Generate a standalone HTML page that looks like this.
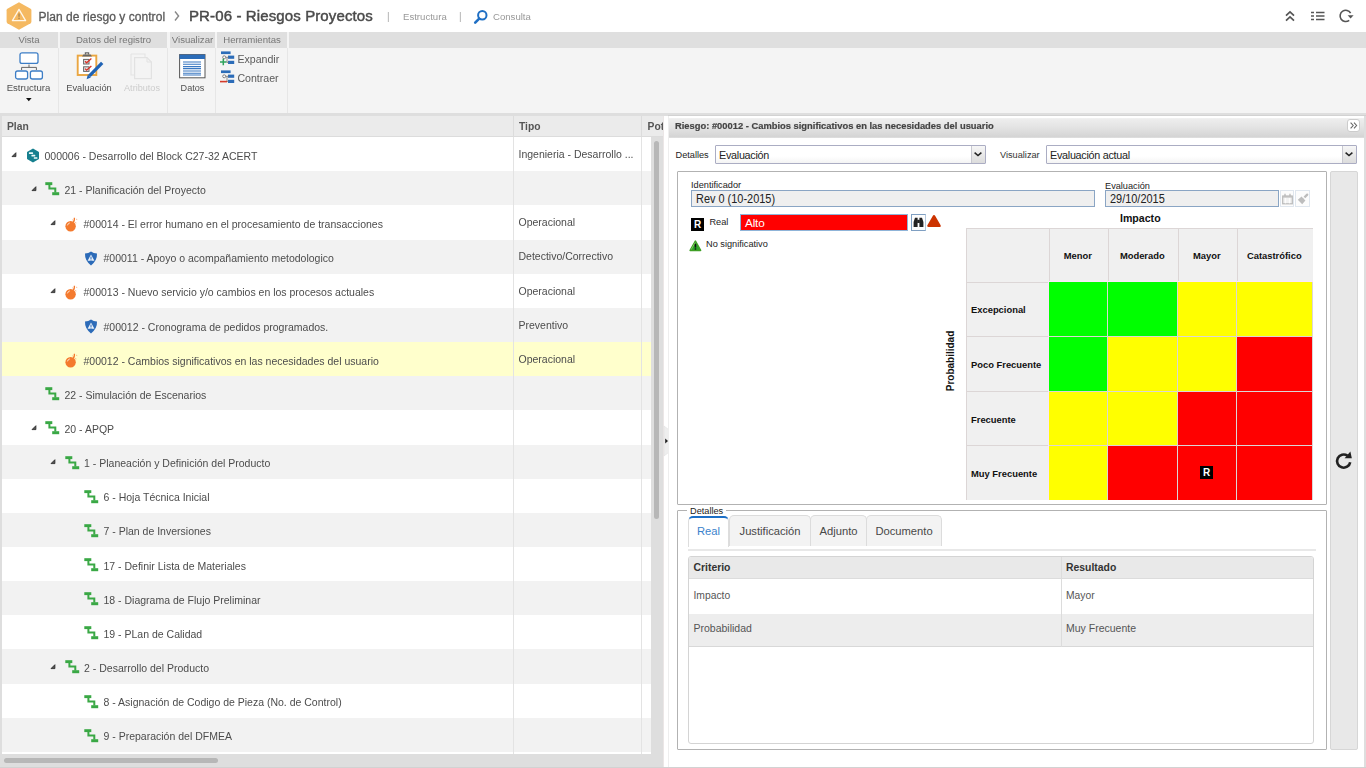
<!DOCTYPE html>
<html lang="es">
<head>
<meta charset="utf-8">
<title>PR-06 - Riesgos Proyectos</title>
<style>
*{box-sizing:border-box;margin:0;padding:0}
html,body{width:1366px;height:768px;overflow:hidden;background:#fff;font-family:"Liberation Sans",sans-serif;font-size:11px;color:#444}
.abs{position:absolute}
svg{position:absolute;overflow:visible}
#top{will-change:transform;position:absolute;left:0;top:0;width:1366px;height:32px;background:#fff}
#top .t1{position:absolute;left:38.5px;top:10px;font-size:12px;color:#5a5a5a;white-space:nowrap;-webkit-text-stroke:0.3px #5a5a5a;letter-spacing:.05px}
#top .t2{position:absolute;left:189px;top:6.6px;font-size:15px;color:#4a4a4a;white-space:nowrap;-webkit-text-stroke:0.45px #4a4a4a;letter-spacing:0.12px}
#top .bar{position:absolute;top:11px;font-size:10px;color:#aaa}
#top .lnk{position:absolute;top:11px;font-size:9.6px;color:#999;white-space:nowrap}
/* ribbon */
#ribbon{will-change:transform;position:absolute;left:0;top:32px;width:1366px;height:81px;background:#f4f4f4}
.gh{position:absolute;top:0;height:16px;background:#dfdfdf;color:#777;font-size:9.6px;text-align:center;line-height:15px;white-space:nowrap}
.gs{position:absolute;top:16px;width:1px;height:65px;background:#e6e6e6}
.lbl{position:absolute;font-size:9.6px;color:#505050;white-space:nowrap;text-align:center;line-height:12px}
.lbl2{position:absolute;font-size:10.6px;color:#5a5a5a;white-space:nowrap;line-height:12px}
#band{position:absolute;left:0;top:113px;width:1366px;height:3px;background:#dedede}
#band2{position:absolute;left:668px;top:115px;width:698px;height:1px;background:#d2d2d2}
/* grid */
#grid{position:absolute;left:0;top:116px;width:663px;height:652px;background:#dedede}
#ghead{will-change:transform;position:absolute;left:2px;top:0;width:661px;height:21px;background:#ebebeb;border-bottom:1px solid #dcdcdc}
#ghead span{position:absolute;top:4.9px;font-size:10.3px;font-weight:bold;color:#555;white-space:nowrap}
#gbody{will-change:transform;position:absolute;left:2px;top:21px;width:649px;height:617px;background:#fff;overflow:hidden}
.row{position:absolute;left:0;width:649px;height:34.15px;background:#fff}
.row.alt{background:#f2f2f2}
.row.sel{background:#ffffcc}
.row .tx{position:absolute;top:12.6px;font-size:10.5px;color:#4c4c4c;white-space:nowrap;line-height:13px}
.row .tp{position:absolute;left:516.5px;top:10.8px;font-size:10.5px;color:#4c4c4c;white-space:nowrap;line-height:13px}
.vline{position:absolute;top:0;width:1px;background:#e3e3e3}
#vtrack{position:absolute;left:651px;top:21px;width:12px;height:617px;background:#dedede}
#vthumb{position:absolute;left:654px;top:25px;width:5px;height:378px;background:#b7b7b7;border-radius:3px}
#hthumb{position:absolute;left:4px;top:642px;width:214px;height:5px;background:#b7b7b7;border-radius:3px}
/* splitter */
#split{position:absolute;left:663px;top:116px;width:5px;height:652px;background:#fff;border-left:1px solid #ebe6e6}
/* right panel */
#rp{position:absolute;left:668px;top:116px;width:696px;height:651px;background:#fff;border-left:1px solid #eee}
#rphead{will-change:transform;position:absolute;left:0;top:0;width:696px;height:22px;background:linear-gradient(#fff,#fff 7%,#eeeeee 12%,#e4e4e4 50%,#d4d4d4 96%,#e8e8e8)}
#rphead span{position:absolute;left:6px;top:3.6px;font-size:9.8px;-webkit-text-stroke:.2px #444;transform:scaleX(.955);transform-origin:left center;font-weight:bold;color:#444;white-space:nowrap}
.sel-box{position:absolute;height:19px;border:1px solid #abadc3;background:linear-gradient(#fff,#fff 60%,#f4f4f4);font-size:10.8px;letter-spacing:-.28px;color:#222;line-height:19px;padding-left:3px;white-space:nowrap;border-radius:1px}
.sel-box i{position:absolute;right:0;top:0;width:14px;height:17px;background:linear-gradient(#f6f6f6,#dcdcdc);border-left:1px solid #c8c8d0}
.fs{position:absolute;border:1px solid #b2b2b2;border-radius:1px}
.inp{position:absolute;height:17px;border:1px solid #8aa5c4;background:#efefef;font-size:12.5px;color:#222;line-height:17.6px;padding-left:3.6px;white-space:nowrap}
.s10{font-size:9.2px;color:#222;white-space:nowrap;position:absolute;line-height:11px}
.s9{font-size:9.2px;color:#222;white-space:nowrap;position:absolute;line-height:11px}
.ricon{position:absolute;width:13px;height:13px;background:#000;color:#fff;font-size:10px;font-weight:bold;line-height:13px;text-align:center}
/* matrix */
.mc{position:absolute;background:#f0f0f0}
.mh{position:absolute;font-size:9.4px;font-weight:bold;color:#111;white-space:nowrap;line-height:12px}
.g{background:#00ff00}.y{background:#ffff00}.r{background:#ff0000}
/* tabs */
.tab{position:absolute;top:-.6px;height:30.6px;background:#f3f3f3;border:1px solid #dcdcdc;border-bottom:none;border-radius:5px 5px 0 0;font-size:11.2px;color:#484848;line-height:30.4px;text-align:center;white-space:nowrap}
.tab.on{top:0;background:#fff;border:1px solid #ddd;border-top:2px solid #1c6fc6;border-bottom:none;height:31px;color:#3a82cc;line-height:27.2px}

.inp b{font-weight:normal;display:inline-block;transform:scale(.875,1);transform-origin:left center}

</style>
</head>
<body>
<div id="top">
  <svg style="left:5.3px;top:.8px" width="28" height="30" viewBox="0 0 28 30"><path d="M14 1.2 L25.6 7.8 Q26.4 8.3 26.4 9.2 V20.8 Q26.4 21.7 25.6 22.2 L14 28.8 L2.4 22.2 Q1.6 21.7 1.6 20.8 V9.2 Q1.6 8.3 2.4 7.8 Z" fill="#f5b961"/><path d="M14 8.4 L20.6 19.6 H7.4 Z" fill="none" stroke="#fff7ea" stroke-width="1.3" stroke-linejoin="round"/><rect x="13.2" y="12.4" width="1.7" height="3.4" fill="#b98f55"/><rect x="13.2" y="16.6" width="1.7" height="1.5" fill="#b98f55"/></svg>
  <div class="t1">Plan de riesgo y control</div>
  <svg style="left:173px;top:10px" width="8" height="12" viewBox="0 0 8 12"><path d="M2 1.5 L5.6 6 L2 10.5" fill="none" stroke="#888" stroke-width="1.4"/></svg>
  <div class="t2">PR-06 - Riesgos Proyectos</div>
  <div class="bar" style="left:387px">|</div>
  <div class="lnk" style="left:403px">Estructura</div>
  <div class="bar" style="left:459px">|</div>
  <svg style="left:473px;top:9px" width="16" height="16" viewBox="0 0 16 16"><circle cx="9.3" cy="6.3" r="4.2" fill="none" stroke="#1f6fc4" stroke-width="2"/><path d="M6.2 9.6 L2.2 13.6" stroke="#1f6fc4" stroke-width="2.6" stroke-linecap="round"/></svg>
  <div class="lnk" style="left:493px">Consulta</div>
  <!-- right icons -->
  <svg style="left:1285px;top:10px" width="10" height="12" viewBox="0 0 10 12"><path d="M1 5.6 L5 1.8 L9 5.6 M1 10.6 L5 6.8 L9 10.6" fill="none" stroke="#555" stroke-width="1.7"/></svg>
  <svg style="left:1311px;top:11px" width="14" height="10" viewBox="0 0 14 10"><path d="M0 1.5 H3 M5 1.5 H13.5 M0 5 H3 M5 5 H13.5 M0 8.5 H3 M5 8.5 H13.5" stroke="#555" stroke-width="1.5"/></svg>
  <svg style="left:1338px;top:8px" width="17" height="15" viewBox="0 0 17 15"><path d="M11.2 12.3 A5.6 5.6 0 1 1 12.6 5.2" fill="none" stroke="#555" stroke-width="1.6"/><path d="M9.6 7.2 H15.6 L12.6 10.6 Z" fill="#555"/></svg>
</div>

<div id="ribbon">
  <div class="gh" style="left:0;width:58px">Vista</div>
  <div class="gh" style="left:60px;width:107px">Datos del registro</div>
  <div class="gh" style="left:170px;width:45px">Visualizar</div>
  <div class="gh" style="left:217px;width:70px">Herramientas</div>
  <div class="gh" style="left:289px;width:1077px"></div>
  <div class="gs" style="left:58px"></div><div class="gs" style="left:167px"></div><div class="gs" style="left:215px"></div><div class="gs" style="left:287px"></div>
  <!-- Estructura icon -->
  <svg style="left:14px;top:19px" width="30" height="29" viewBox="0 0 30 29"><rect x="6" y="1.8" width="18" height="10.6" rx="2" fill="#fff" stroke="#3d7ec6" stroke-width="1.3"/><rect x="1.6" y="20" width="12" height="8" rx="2" fill="#fff" stroke="#3d7ec6" stroke-width="1.3"/><rect x="16.4" y="20" width="12" height="8" rx="2" fill="#fff" stroke="#3d7ec6" stroke-width="1.3"/><path d="M15 13.5 V16.4 M7.6 19 V16.4 H22.4 V19" fill="none" stroke="#666" stroke-width="1"/></svg>
  <div class="lbl" style="left:0;width:57px;top:50px">Estructura</div>
  <svg style="left:26px;top:66px" width="6" height="4" viewBox="0 0 6 4"><path d="M0 0 H5.6 L2.8 3.2 Z" fill="#111"/></svg>
  <!-- Evaluacion icon -->
  <svg style="left:76px;top:20px" width="29" height="29" viewBox="0 0 29 29"><rect x="1.7" y="3.6" width="18.6" height="19.4" fill="#fff" stroke="#eaa642" stroke-width="1.9"/><path d="M6 4.4 L7.4 2.6 H14.6 L16 4.4 Z" fill="#666"/><path d="M9.4 2.6 V.8 H12.6 V2.6" stroke="#666" stroke-width="1.2" fill="none"/><rect x="7.6" y="7.4" width="5.4" height="4.6" fill="#e6e6e6" stroke="#666" stroke-width="1"/><rect x="7.6" y="14.8" width="5.4" height="4.6" fill="#e6e6e6" stroke="#666" stroke-width="1"/><path d="M9 9.2 L10.6 10.8 L15.4 6.6 M9 16.6 L10.6 18.2 L15.4 14" stroke="#d93025" stroke-width="1.3" fill="none"/><path d="M26.2 10.8 L13.4 23.8" stroke="#1f63b5" stroke-width="3.3"/><path d="M10.6 27.2 L11.8 22.6 L14.8 25.4 Z" fill="#1f63b5"/></svg>
  <div class="lbl" style="left:60px;width:58px;top:50px;font-size:9.3px">Evaluación</div>
  <!-- Atributos icon (disabled) -->
  <svg style="left:130px;top:21px" width="23" height="27" viewBox="0 0 23 27"><path d="M1 1 H15 V4" fill="none" stroke="#e4e4e4" stroke-width="1.2"/><path d="M1 1 V22 H4" fill="none" stroke="#e4e4e4" stroke-width="1.2"/><path d="M4.6 4.6 H17 L21.4 9 V25.6 H4.6 Z" fill="#f4f4f4" stroke="#e2e2e2" stroke-width="1.2"/><path d="M17 4.6 V9 H21.4" fill="none" stroke="#e2e2e2" stroke-width="1"/></svg>
  <div class="lbl" style="left:118px;width:48px;top:50px;color:#ccc;font-size:9.1px">Atributos</div>
  <!-- Datos icon -->
  <svg style="left:179px;top:22px" width="27" height="25" viewBox="0 0 27 25"><rect x=".6" y=".6" width="25.4" height="23.2" fill="#fff" stroke="#555" stroke-width="1"/><rect x=".6" y=".6" width="25.4" height="4.4" fill="#2b6cb8"/><path d="M4 8 H22 M4 10.2 H22 M4 12.6 H22 M4 14.6 H22 M4 17 H22 M4 19.2 H22 M4 21 H22" stroke="#3a78c2" stroke-width="1.1"/></svg>
  <div class="lbl" style="left:170px;width:45px;top:50px;font-size:9.1px">Datos</div>
  <!-- Expandir / Contraer -->
  <svg style="left:220px;top:19px" width="15" height="15" viewBox="0 0 15 15"><rect x="1" y=".4" width="9.6" height="2.7" fill="#2b6cb8"/><rect x="8" y="4.6" width="6.2" height="3.2" fill="#2b6cb8"/><rect x="8" y="9.8" width="6.2" height="3.2" fill="#2b6cb8"/><circle cx="4.2" cy="6.3" r="1.5" fill="#fff" stroke="#666" stroke-width=".8"/><path d="M5.8 6.3 H8.6 M7 6.3 V11.4 H8.6" stroke="#777" stroke-width=".8" fill="none"/><path d="M0 11 H6.6 M3.3 7.8 V14.2" stroke="#2ea35c" stroke-width="1.5"/></svg>
  <div class="lbl2" style="left:237.4px;top:20.6px">Expandir</div>
  <svg style="left:220px;top:38px" width="15" height="15" viewBox="0 0 15 15"><rect x="1" y=".4" width="9.6" height="2.7" fill="#2b6cb8"/><rect x="8" y="4.6" width="6.2" height="3.2" fill="#2b6cb8"/><rect x="8" y="9.8" width="6.2" height="3.2" fill="#2b6cb8"/><circle cx="4.2" cy="6.3" r="1.5" fill="#fff" stroke="#666" stroke-width=".8"/><path d="M5.8 6.3 H8.6 M7 6.3 V11.4 H8.6" stroke="#777" stroke-width=".8" fill="none"/><path d="M0 11.6 H7" stroke="#d43a2a" stroke-width="1.6"/></svg>
  <div class="lbl2" style="left:237.4px;top:39.6px">Contraer</div>
</div>
<div id="band"></div><div id="band2"></div>

<div id="grid">
  <div id="ghead"><span style="left:5px">Plan</span><span style="left:517px">Tipo</span><span style="left:645.6px">Pot</span>
    <div class="vline" style="left:511px;height:20px;background:#dcdcdc"></div><div class="vline" style="left:639px;height:20px;background:#dcdcdc"></div></div>
  <div id="gbody">
<div class="row " style="top:0.2px"><svg style="left:9.2px;top:14.6px" width="6" height="6" viewBox="0 0 6 6"><path d="M4.9 .7 V4.6 H1 Z" fill="#555" stroke="#222" stroke-width=".8"/></svg><svg style="left:23.6px;top:11px" width="14" height="15" viewBox="0 0 14 15"><path d="M7 .6 L12.6 3.8 Q13 4 13 4.5 V10.5 Q13 11 12.6 11.2 L7 14.4 L1.4 11.2 Q1 11 1 10.5 V4.5 Q1 4 1.4 3.8 Z" fill="#17808f"/><rect x="2.9" y="4.3" width="4.2" height="1.6" rx=".4" fill="#eefafa"/><rect x="5.4" y="6.8" width="3.9" height="1.6" rx=".4" fill="#eefafa"/><rect x="7.8" y="9.2" width="3.6" height="1.6" rx=".4" fill="#eefafa"/></svg><div class="tx" style="left:42.5px">000006 - Desarrollo del Block C27-32 ACERT</div><div class="tp">Ingenieria - Desarrollo ...</div></div>
<div class="row alt" style="top:34.35px"><svg style="left:29.2px;top:14.6px" width="6" height="6" viewBox="0 0 6 6"><path d="M4.9 .7 V4.6 H1 Z" fill="#555" stroke="#222" stroke-width=".8"/></svg><svg style="left:42.6px;top:11px" width="15" height="14" viewBox="0 0 15 14"><rect x=".3" y=".2" width="7" height="2.9" fill="#3aa845"/><path d="M4.4 3 V6.4 H10.3 V10.4" fill="none" stroke="#3aa845" stroke-width="2"/><rect x="7.2" y="10.2" width="7" height="3" fill="#3aa845"/></svg><div class="tx" style="left:62.5px">21 - Planificación del Proyecto</div></div>
<div class="row " style="top:68.5px"><svg style="left:48.2px;top:14.6px" width="6" height="6" viewBox="0 0 6 6"><path d="M4.9 .7 V4.6 H1 Z" fill="#555" stroke="#222" stroke-width=".8"/></svg><svg style="left:62.6px;top:11px" width="14" height="15" viewBox="0 0 14 15"><circle cx="5.6" cy="9.3" r="5.2" fill="#f47a2e"/><path d="M8 5.2 Q9.6 4.6 9.4 .8" stroke="#f47a2e" stroke-width="1.3" fill="none"/><path d="M7.2 2.6 L7.8 3.2 M11.2 2.2 L12.2 2.6 M10.6 5.2 L10.9 6.4" stroke="#f9a56c" stroke-width=".9"/><path d="M2.4 8.4 Q2.9 6.4 4.8 5.9" stroke="#fde3cf" stroke-width="1" fill="none"/></svg><div class="tx" style="left:81.5px">#00014 - El error humano en el procesamiento de transacciones</div><div class="tp">Operacional</div></div>
<div class="row alt" style="top:102.65px"><svg style="left:81.6px;top:11px" width="14" height="15" viewBox="0 0 14 15"><path d="M7 .5 Q9.5 2.4 13 2.6 Q13.4 9.5 7 14.5 Q.6 9.5 1 2.6 Q4.5 2.4 7 .5 Z" fill="#2c6bb8"/><path d="M7 3.6 L10.4 9.8 H3.6 Z" fill="#e9f1fa"/><rect x="6.5" y="5.6" width="1" height="2.4" fill="#2c6bb8"/><rect x="6.5" y="8.5" width="1" height="1" fill="#2c6bb8"/></svg><div class="tx" style="left:101.5px">#00011 - Apoyo o acompañamiento metodologico</div><div class="tp">Detectivo/Correctivo</div></div>
<div class="row " style="top:136.8px"><svg style="left:48.2px;top:14.6px" width="6" height="6" viewBox="0 0 6 6"><path d="M4.9 .7 V4.6 H1 Z" fill="#555" stroke="#222" stroke-width=".8"/></svg><svg style="left:62.6px;top:11px" width="14" height="15" viewBox="0 0 14 15"><circle cx="5.6" cy="9.3" r="5.2" fill="#f47a2e"/><path d="M8 5.2 Q9.6 4.6 9.4 .8" stroke="#f47a2e" stroke-width="1.3" fill="none"/><path d="M7.2 2.6 L7.8 3.2 M11.2 2.2 L12.2 2.6 M10.6 5.2 L10.9 6.4" stroke="#f9a56c" stroke-width=".9"/><path d="M2.4 8.4 Q2.9 6.4 4.8 5.9" stroke="#fde3cf" stroke-width="1" fill="none"/></svg><div class="tx" style="left:81.5px">#00013 - Nuevo servicio y/o cambios en los procesos actuales</div><div class="tp">Operacional</div></div>
<div class="row alt" style="top:170.95px"><svg style="left:81.6px;top:11px" width="14" height="15" viewBox="0 0 14 15"><path d="M7 .5 Q9.5 2.4 13 2.6 Q13.4 9.5 7 14.5 Q.6 9.5 1 2.6 Q4.5 2.4 7 .5 Z" fill="#2c6bb8"/><path d="M7 3.6 L10.4 9.8 H3.6 Z" fill="#e9f1fa"/><rect x="6.5" y="5.6" width="1" height="2.4" fill="#2c6bb8"/><rect x="6.5" y="8.5" width="1" height="1" fill="#2c6bb8"/></svg><div class="tx" style="left:101.5px">#00012 - Cronograma de pedidos programados.</div><div class="tp">Preventivo</div></div>
<div class="row sel" style="top:205.1px"><svg style="left:62.6px;top:11px" width="14" height="15" viewBox="0 0 14 15"><circle cx="5.6" cy="9.3" r="5.2" fill="#f47a2e"/><path d="M8 5.2 Q9.6 4.6 9.4 .8" stroke="#f47a2e" stroke-width="1.3" fill="none"/><path d="M7.2 2.6 L7.8 3.2 M11.2 2.2 L12.2 2.6 M10.6 5.2 L10.9 6.4" stroke="#f9a56c" stroke-width=".9"/><path d="M2.4 8.4 Q2.9 6.4 4.8 5.9" stroke="#fde3cf" stroke-width="1" fill="none"/></svg><div class="tx" style="left:81.5px">#00012 - Cambios significativos en las necesidades del usuario</div><div class="tp">Operacional</div></div>
<div class="row alt" style="top:239.25px"><svg style="left:42.6px;top:11px" width="15" height="14" viewBox="0 0 15 14"><rect x=".3" y=".2" width="7" height="2.9" fill="#3aa845"/><path d="M4.4 3 V6.4 H10.3 V10.4" fill="none" stroke="#3aa845" stroke-width="2"/><rect x="7.2" y="10.2" width="7" height="3" fill="#3aa845"/></svg><div class="tx" style="left:62.5px">22 - Simulación de Escenarios</div></div>
<div class="row " style="top:273.4px"><svg style="left:29.2px;top:14.6px" width="6" height="6" viewBox="0 0 6 6"><path d="M4.9 .7 V4.6 H1 Z" fill="#555" stroke="#222" stroke-width=".8"/></svg><svg style="left:42.6px;top:11px" width="15" height="14" viewBox="0 0 15 14"><rect x=".3" y=".2" width="7" height="2.9" fill="#3aa845"/><path d="M4.4 3 V6.4 H10.3 V10.4" fill="none" stroke="#3aa845" stroke-width="2"/><rect x="7.2" y="10.2" width="7" height="3" fill="#3aa845"/></svg><div class="tx" style="left:62.5px">20 - APQP</div></div>
<div class="row alt" style="top:307.55px"><svg style="left:48.2px;top:14.6px" width="6" height="6" viewBox="0 0 6 6"><path d="M4.9 .7 V4.6 H1 Z" fill="#555" stroke="#222" stroke-width=".8"/></svg><svg style="left:62.6px;top:11px" width="15" height="14" viewBox="0 0 15 14"><rect x=".3" y=".2" width="7" height="2.9" fill="#3aa845"/><path d="M4.4 3 V6.4 H10.3 V10.4" fill="none" stroke="#3aa845" stroke-width="2"/><rect x="7.2" y="10.2" width="7" height="3" fill="#3aa845"/></svg><div class="tx" style="left:82.1px">1 - Planeación y Definición del Producto</div></div>
<div class="row " style="top:341.7px"><svg style="left:81.6px;top:11px" width="15" height="14" viewBox="0 0 15 14"><rect x=".3" y=".2" width="7" height="2.9" fill="#3aa845"/><path d="M4.4 3 V6.4 H10.3 V10.4" fill="none" stroke="#3aa845" stroke-width="2"/><rect x="7.2" y="10.2" width="7" height="3" fill="#3aa845"/></svg><div class="tx" style="left:101.5px">6 - Hoja Técnica Inicial</div></div>
<div class="row alt" style="top:375.85px"><svg style="left:81.6px;top:11px" width="15" height="14" viewBox="0 0 15 14"><rect x=".3" y=".2" width="7" height="2.9" fill="#3aa845"/><path d="M4.4 3 V6.4 H10.3 V10.4" fill="none" stroke="#3aa845" stroke-width="2"/><rect x="7.2" y="10.2" width="7" height="3" fill="#3aa845"/></svg><div class="tx" style="left:101.5px">7 - Plan de Inversiones</div></div>
<div class="row " style="top:410.0px"><svg style="left:81.6px;top:11px" width="15" height="14" viewBox="0 0 15 14"><rect x=".3" y=".2" width="7" height="2.9" fill="#3aa845"/><path d="M4.4 3 V6.4 H10.3 V10.4" fill="none" stroke="#3aa845" stroke-width="2"/><rect x="7.2" y="10.2" width="7" height="3" fill="#3aa845"/></svg><div class="tx" style="left:101.5px">17 - Definir Lista de Materiales</div></div>
<div class="row alt" style="top:444.15px"><svg style="left:81.6px;top:11px" width="15" height="14" viewBox="0 0 15 14"><rect x=".3" y=".2" width="7" height="2.9" fill="#3aa845"/><path d="M4.4 3 V6.4 H10.3 V10.4" fill="none" stroke="#3aa845" stroke-width="2"/><rect x="7.2" y="10.2" width="7" height="3" fill="#3aa845"/></svg><div class="tx" style="left:101.5px">18 - Diagrama de Flujo Preliminar</div></div>
<div class="row " style="top:478.3px"><svg style="left:81.6px;top:11px" width="15" height="14" viewBox="0 0 15 14"><rect x=".3" y=".2" width="7" height="2.9" fill="#3aa845"/><path d="M4.4 3 V6.4 H10.3 V10.4" fill="none" stroke="#3aa845" stroke-width="2"/><rect x="7.2" y="10.2" width="7" height="3" fill="#3aa845"/></svg><div class="tx" style="left:101.5px">19 - PLan de Calidad</div></div>
<div class="row alt" style="top:512.45px"><svg style="left:48.2px;top:14.6px" width="6" height="6" viewBox="0 0 6 6"><path d="M4.9 .7 V4.6 H1 Z" fill="#555" stroke="#222" stroke-width=".8"/></svg><svg style="left:62.6px;top:11px" width="15" height="14" viewBox="0 0 15 14"><rect x=".3" y=".2" width="7" height="2.9" fill="#3aa845"/><path d="M4.4 3 V6.4 H10.3 V10.4" fill="none" stroke="#3aa845" stroke-width="2"/><rect x="7.2" y="10.2" width="7" height="3" fill="#3aa845"/></svg><div class="tx" style="left:82.1px">2 - Desarrollo del Producto</div></div>
<div class="row " style="top:546.6px"><svg style="left:81.6px;top:11px" width="15" height="14" viewBox="0 0 15 14"><rect x=".3" y=".2" width="7" height="2.9" fill="#3aa845"/><path d="M4.4 3 V6.4 H10.3 V10.4" fill="none" stroke="#3aa845" stroke-width="2"/><rect x="7.2" y="10.2" width="7" height="3" fill="#3aa845"/></svg><div class="tx" style="left:101.5px">8 - Asignación de Codigo de Pieza (No. de Control)</div></div>
<div class="row alt" style="top:580.75px"><svg style="left:81.6px;top:11px" width="15" height="14" viewBox="0 0 15 14"><rect x=".3" y=".2" width="7" height="2.9" fill="#3aa845"/><path d="M4.4 3 V6.4 H10.3 V10.4" fill="none" stroke="#3aa845" stroke-width="2"/><rect x="7.2" y="10.2" width="7" height="3" fill="#3aa845"/></svg><div class="tx" style="left:101.5px">9 - Preparación del DFMEA</div></div>
    <div class="vline" style="left:511px;height:617px"></div>
    <div class="vline" style="left:639px;height:617px"></div>
  </div>
  <div id="vtrack"></div><div id="vthumb"></div><div id="hthumb"></div>
</div>
<div id="split">
  <svg style="left:0;top:310px" width="5" height="30" viewBox="0 0 5 30"><path d="M0 0 L4.5 3.5 V26.5 L0 30 Z" fill="#eee" stroke="#e0e0e0" stroke-width=".6"/><path d="M1.2 12.5 L4 15 L1.2 17.5 Z" fill="#222"/></svg>
</div>

<div id="rp">
  <div id="rphead"><span>Riesgo: #00012 - Cambios significativos en las necesidades del usuario</span>
    <div class="abs" style="left:678px;top:3px;width:13px;height:13px;background:#fff;border:1px solid #ccc;border-radius:3px"></div>
    <svg style="left:681px;top:6px" width="8" height="7" viewBox="0 0 8 7"><path d="M.6 .6 L3.2 3.5 L.6 6.4 M4 .6 L6.6 3.5 L4 6.4" fill="none" stroke="#666" stroke-width="1.1"/></svg>
  </div>
  <div class="s10" style="left:6.5px;top:33.8px">Detalles</div>
  <div class="sel-box" style="left:46px;top:29px;width:271px">Evaluación<i></i></div>
  <div class="s10" style="left:331px;top:33.8px;color:#333">Visualizar</div>
  <div class="sel-box" style="left:377px;top:29px;width:311px">Evaluación actual<i></i></div>
  <svg style="left:305px;top:36px" width="8" height="5" viewBox="0 0 8 5"><path d="M.6 .6 L4 3.6 L7.4 .6" fill="none" stroke="#222" stroke-width="1.5"/></svg>
  <svg style="left:676px;top:36px" width="8" height="5" viewBox="0 0 8 5"><path d="M.6 .6 L4 3.6 L7.4 .6" fill="none" stroke="#222" stroke-width="1.5"/></svg>

  <!-- fieldset 1 -->
  <div class="fs" style="left:8px;top:55px;width:650px;height:334px"></div>
  <div class="s9" style="left:22px;top:64.2px">Identificador</div>
  <div class="inp" style="left:22px;top:74px;width:404px"><b>Rev 0 (10-2015)</b></div>
  <div class="s9" style="left:436px;top:64.6px">Evaluación</div>
  <div class="inp" style="left:436px;top:74px;width:174px"><b>29/10/2015</b></div>
  <div class="abs" style="left:611px;top:74px;width:14px;height:17px;border:1px solid #dfe6ee;background:#fcfcfc"></div>
  <div class="abs" style="left:626px;top:74px;width:15px;height:17px;border:1px solid #dfe6ee;background:#fcfcfc"></div>
  <svg style="left:613px;top:76.5px" width="11" height="12" viewBox="0 0 11 12"><rect x=".7" y="3" width="9.6" height="7.8" fill="#f2f2f2" stroke="#b9b9b9" stroke-width="1.2"/><path d="M.7 3.8 H10.3" stroke="#c0c0c0" stroke-width="1.6"/><path d="M3 .8 V3 M8 .8 V3" stroke="#b5b5b5" stroke-width="1.2"/><path d="M3.6 5 V10.4 M7.4 5 V10.4" stroke="#fff" stroke-width=".9"/></svg>
  <svg style="left:628px;top:76.5px" width="12" height="12" viewBox="0 0 12 12"><path d="M10.2 1.6 L7.2 4.6" stroke="#bcbcbc" stroke-width="2.2" stroke-linecap="round"/><path d="M4.6 3.6 L8.4 7.4 L5.2 11.2 L.8 6.8 Z" fill="#bdbdbd"/><path d="M5.6 3.4 L8.6 6.4" stroke="#fcfcfc" stroke-width="1.1"/></svg>

  <div class="ricon" style="left:22px;top:101.6px">R</div>
  <div class="s10" style="left:40.4px;top:101.4px">Real</div>
  <div class="abs" style="left:71px;top:98px;width:168px;height:17px;background:#f00;border:1px solid #8fb4d8;color:#fff;font-size:11.8px;letter-spacing:-.2px;line-height:16.5px;padding-left:4px">Alto</div>
  <div class="abs" style="left:242px;top:98px;width:15px;height:17px;border:1px solid #7f9fc2;border-right-color:#b5c8dc;background:#fdfdfd"></div>
  <svg style="left:244px;top:101px" width="11" height="11" viewBox="0 0 11 11"><path d="M.6 10 V5 L2 .8 H4.6 V10 Z M10.4 10 V5 L9 .8 H6.4 V10 Z" fill="#222"/><rect x="4.2" y="2.8" width="2.6" height="3.2" fill="#222"/></svg>
  <svg style="left:258px;top:98px" width="14" height="14" viewBox="0 0 14 14"><path d="M7 2.4 L12.5 11.8 H1.5 Z" fill="#cc3300" stroke="#cc3300" stroke-linejoin="round" stroke-width="2.6"/></svg>
  <svg style="left:20px;top:123.5px" width="13" height="12" viewBox="0 0 13 12"><path d="M6.4 1.2 L11.6 10.4 H1.2 Z" fill="#2aa52a" stroke="#3f9f25" stroke-linejoin="round" stroke-width="1.6"/><path d="M2.2 9.6 L6.2 2.6" stroke="#7fce5a" stroke-width="1"/><rect x="5.7" y="3.8" width="1.5" height="3.8" fill="#111"/><rect x="5.7" y="8.3" width="1.5" height="1.4" fill="#111"/></svg>
  <div class="s9" style="left:37px;top:123px">No significativo</div>

  <!-- matrix -->
  <div class="mh" style="left:451px;top:96px;font-size:10.6px">Impacto</div>
  <div class="mh" style="left:247px;top:239.2px;transform:rotate(-90deg);transform-origin:center;width:70px;text-align:center;font-size:10px">Probabilidad</div>
  <div class="abs" style="left:297px;top:112px;width:347px;height:272px;background:#dcd6d6"></div>
  <div class="mc" style="left:298px;top:113px;width:82px;height:53px"></div>
  <div class="mc" style="left:381px;top:113px;width:58px;height:53px"></div>
  <div class="mc" style="left:440px;top:113px;width:69px;height:53px"></div>
  <div class="mc" style="left:510px;top:113px;width:58px;height:53px"></div>
  <div class="mc" style="left:569px;top:113px;width:75px;height:53px"></div>
  <div class="mc" style="left:298px;top:167px;width:82px;height:53px"></div>
  <div class="mc" style="left:298px;top:221px;width:82px;height:54px"></div>
  <div class="mc" style="left:298px;top:276px;width:82px;height:53px"></div>
  <div class="mc" style="left:298px;top:330px;width:82px;height:54px"></div>

  <div class="mc g" style="left:380px;top:166px;width:58px;height:54px"></div>
  <div class="mc g" style="left:439px;top:166px;width:69px;height:54px"></div>
  <div class="mc y" style="left:509px;top:166px;width:58px;height:54px"></div>
  <div class="mc y" style="left:568px;top:166px;width:75px;height:54px"></div>

  <div class="mc g" style="left:380px;top:221px;width:58px;height:54px"></div>
  <div class="mc y" style="left:439px;top:221px;width:69px;height:54px"></div>
  <div class="mc y" style="left:509px;top:221px;width:58px;height:54px"></div>
  <div class="mc r" style="left:568px;top:221px;width:75px;height:54px"></div>

  <div class="mc y" style="left:380px;top:276px;width:58px;height:53px"></div>
  <div class="mc y" style="left:439px;top:276px;width:69px;height:53px"></div>
  <div class="mc r" style="left:509px;top:276px;width:58px;height:53px"></div>
  <div class="mc r" style="left:568px;top:276px;width:75px;height:53px"></div>

  <div class="mc y" style="left:380px;top:330px;width:58px;height:54px"></div>
  <div class="mc r" style="left:439px;top:330px;width:69px;height:54px"></div>
  <div class="mc r" style="left:509px;top:330px;width:58px;height:54px"></div>
  <div class="mc r" style="left:568px;top:330px;width:75px;height:54px"></div>

  <div class="abs" style="left:379px;top:166px;width:1px;height:218px;background:#fbe6fb"></div><div class="abs" style="left:380px;top:165px;width:264px;height:1px;background:#fbe6fb"></div>
  <div class="mh" style="left:379.8px;top:133.6px;width:58px;text-align:center">Menor</div>
  <div class="mh" style="left:438.8px;top:133.6px;width:69px;text-align:center">Moderado</div>
  <div class="mh" style="left:508.8px;top:133.6px;width:58px;text-align:center">Mayor</div>
  <div class="mh" style="left:567.8px;top:133.6px;width:75px;text-align:center">Catastrófico</div>
  <div class="mh" style="left:302px;top:188.2px">Excepcional</div>
  <div class="mh" style="left:302px;top:243.2px">Poco Frecuente</div>
  <div class="mh" style="left:302px;top:297.7px">Frecuente</div>
  <div class="mh" style="left:302px;top:352.3px">Muy Frecuente</div>
  <div class="ricon" style="left:531px;top:350px">R</div>

  <!-- fieldset 2 -->
  <div class="fs" style="left:8px;top:394px;width:650px;height:240px"></div>
  <div class="s10" style="left:18px;top:389.7px;background:#fff;padding:0 3px">Detalles</div>
  <div class="abs" style="left:19px;top:400px;width:628px;height:35px">
    <div class="tab on" style="left:0;width:41px;z-index:2">Real</div>
    <div class="tab" style="left:41px;width:82px">Justificación</div>
    <div class="tab" style="left:122px;width:57px">Adjunto</div>
    <div class="tab" style="left:178px;width:76px">Documento</div>
    <div class="abs" style="left:0;top:33px;width:628px;height:2px;background:#e8e8e8"></div>
  </div>
  <div class="abs" style="left:19px;top:440px;width:626px;height:188px;border:1px solid #d4d4d4;border-radius:3px;background:#fff;overflow:hidden">
    <div class="abs" style="left:0;top:0;width:624px;height:22px;background:#e9e9e9;border-bottom:1px solid #dcdcdc"></div>
    <div class="abs" style="left:0;top:57px;width:624px;height:33px;background:#ededed;border-bottom:1px solid #d8d8d8"></div>
    <div class="abs" style="left:372px;top:0;width:1px;height:90px;background:#dcdcdc"></div>
    <div class="abs" style="left:4.5px;top:5px;font-size:10.4px;font-weight:bold;color:#333">Criterio</div>
    <div class="abs" style="left:377px;top:5px;font-size:10.4px;font-weight:bold;color:#333">Resultado</div>
    <div class="abs" style="left:4.5px;top:32.5px;font-size:10.3px;color:#555">Impacto</div>
    <div class="abs" style="left:377px;top:32.5px;font-size:10.3px;color:#555">Mayor</div>
    <div class="abs" style="left:4.5px;top:65px;font-size:10.5px;color:#555">Probabilidad</div>
    <div class="abs" style="left:377px;top:65px;font-size:10.5px;color:#555">Muy Frecuente</div>
  </div>

  <!-- right gray bar -->
  <div class="abs" style="left:661px;top:55px;width:27.5px;height:579px;background:#e8e8e8;border:1px solid #d6d6d6;border-radius:2px"></div>
  <svg style="left:666.3px;top:334.7px" width="18" height="19" viewBox="0 0 18 19"><path d="M15.2 11.2 A6.6 6.6 0 1 1 12.4 4.6" fill="none" stroke="#222" stroke-width="2.6"/><path d="M9.6 7.2 L16.8 7.2 L15.4 .6 Z" fill="#222"/></svg>
</div>
<div class="abs" style="left:1364px;top:116px;width:2px;height:652px;background:#dedede"></div>
<div class="abs" style="left:0;top:767px;width:1366px;height:1px;background:#d2d2d2"></div>
</body>
</html>
